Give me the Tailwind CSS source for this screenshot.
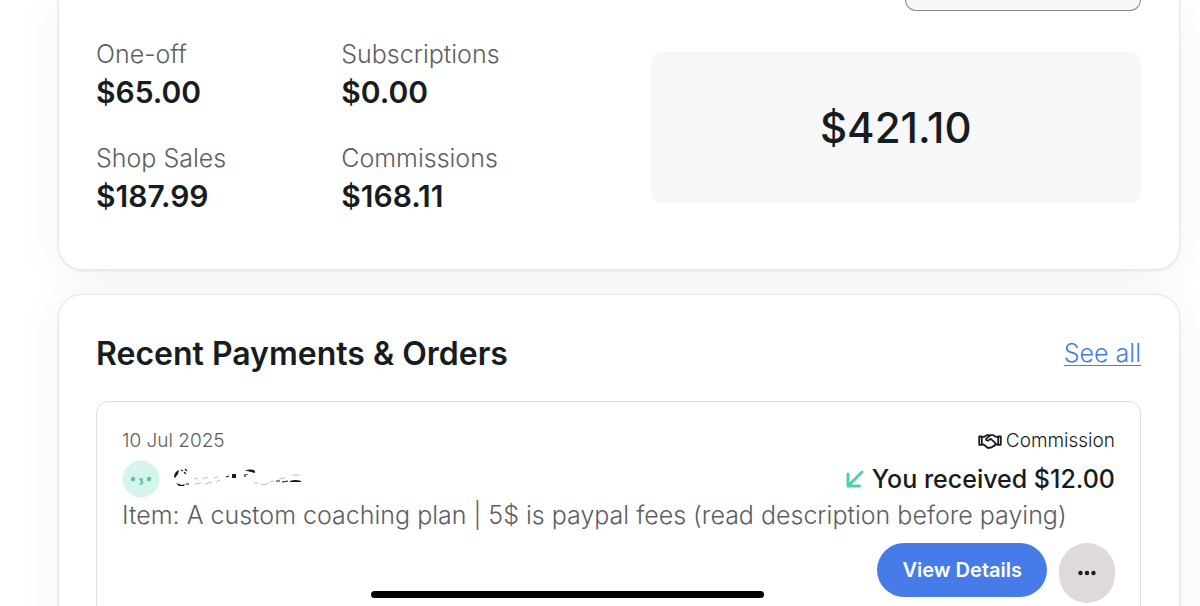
<!DOCTYPE html>
<html lang="en">
<head>
    <meta charset="UTF-8">
    <meta name="viewport" content="width=device-width, initial-scale=1.0">
    <title>Payments</title>
    <script src="https://cdn.jsdelivr.net/npm/@tailwindcss/browser@4"></script>
</head>
<body class="h-screen overflow-hidden bg-white font-['Inter',sans-serif] text-[#171c21]">
    <main class="flex flex-col gap-6 pl-[58px] pr-5">
        <!-- Balance summary -->
        <section class="rounded-b-3xl border border-t-0 border-[#e8e8e8] bg-white pr-[38px] pl-[37px] pb-[53px] shadow-[0_1px_3px_rgba(0,0,0,0.08),0_4px_48px_rgba(0,0,0,0.05)]">
            <div class="flex justify-end">
                <select aria-label="Period" class="h-[11px] w-[236px] appearance-none rounded-b-xl border border-t-0 border-[#8a8a8a] bg-[#f7f7f7]"></select>
            </div>
            <div class="mt-[25px] grid grid-cols-2 gap-16">
                <dl class="grid grid-cols-2 gap-y-7">
                    <div>
                        <dt class="text-[25px] leading-9 font-light text-[#5c5e61]">One-off</dt>
                        <dd class="text-[30px] leading-10 font-semibold">$65.00</dd>
                    </div>
                    <div>
                        <dt class="text-[25px] leading-9 font-light text-[#5c5e61]">Subscriptions</dt>
                        <dd class="text-[30px] leading-10 font-semibold">$0.00</dd>
                    </div>
                    <div>
                        <dt class="text-[25px] leading-9 font-light text-[#5c5e61]">Shop Sales</dt>
                        <dd class="text-[30px] leading-10 font-semibold">$187.99</dd>
                    </div>
                    <div>
                        <dt class="text-[25px] leading-9 font-light text-[#5c5e61]">Commissions</dt>
                        <dd class="text-[30px] leading-10 font-semibold">$168.11</dd>
                    </div>
                </dl>
                <div class="mt-4 flex h-[151px] items-center justify-center rounded-xl bg-[#f7f7f7]">
                    <p class="text-[42px] font-medium">$421.10</p>
                </div>
            </div>
        </section>

        <!-- Recent payments -->
        <section class="rounded-t-3xl border border-b-0 border-[#e8e8e8] bg-white pt-[37px] pr-[38px] pl-[37px] pb-10 shadow-[0_1px_3px_rgba(0,0,0,0.08),0_4px_48px_rgba(0,0,0,0.05)]">
            <div class="flex items-center justify-between">
                <h2 class="text-[32px] leading-11 font-semibold">Recent Payments &amp; Orders</h2>
                <a href="#" class="text-[25px] font-light text-[#467be8] underline decoration-1 underline-offset-3">See all</a>
            </div>

            <article class="mt-[25px] rounded-xl border border-[#dedfe0] px-[25px] pt-[25px] pb-10">
                <div class="flex items-center justify-between text-[19px] leading-7 font-light">
                    <time class="text-[#5c5e61]" datetime="2025-07-10">10 Jul 2025</time>
                    <span class="flex items-center gap-1">
                        <svg class="h-[15px] w-6" viewBox="0 0 24 15" fill="none" stroke="currentColor" stroke-width="1.800" stroke-linejoin="round" stroke-linecap="round">
                            <path d="M1.200 2.500h2.600v8.300H1.200zM22.800 2.500h-2.600v8.300h2.600z"/>
                            <path d="M4 2.800h2.200l2.600-1.600h2.600M20 2.800h-2.200l-2.600-1.600h-2.800L8.300 4.600c-.8 1 .5 2.600 2 1.800l2.500-1.600 4.800 4.600c.9 1-.1 2.200-1.300 1.800M4 10.500h1.600l3.400 2.800c1 .8 2.200.8 3 0 1.200.5 2.200 0 2.600-.9 1 .1 1.700-.3 1.900-1.200M17.800 10.500H20"/>
                        </svg>
                        Commission
                    </span>
                </div>
                <div class="flex items-center justify-between pt-1 leading-10">
                    <div class="flex items-center gap-3">
                        <svg class="size-[38px]" viewBox="0 0 38 38">
                            <circle cx="19" cy="19" r="18.500" fill="#d5f4ec"/>
                            <circle cx="11" cy="19" r="2.200" fill="#4fc9ae"/>
                            <circle cx="27" cy="19" r="2.200" fill="#4fc9ae"/>
                            <path d="M17 19h3l-1 2.200c2.500.2 2 3-1.200 2.600" fill="none" stroke="#4fc9ae" stroke-width="1.700"/>
                        </svg>
                        <!-- Redacted customer name -->
                        <svg class="h-6 w-[132px]" viewBox="0 0 132 24" role="img" aria-label="Hidden name" fill="#16191c">
                            <path d="M2 10c0-3 2-6 5-7l-1 4-3 4zM4 16l6 2 3-1-1 2-5 0zM73 4c3-2 8-2 10 0v2l-8-2z"/>
                            <path d="M9 3l2 1M12 5l2 2M13 2l2 2M14 17h3M73 7v3M75 7v1M54 10l3-1M104 14h4M110 15l6-1" stroke="#16191c" stroke-width="1.200"/>
                            <path d="M118 14q5-2 11 0v1h-11zM60 7h4v4h-4z"/>
                            <path d="M22 12l4-1M23 17l6-1M31 12l5-2M33 17l7-2M42 11l4-1M44 15l4-2M82 16h4M89 17q4 2 8-1M98 15l4-1M107 12l6-1M121 8h6" fill="none" stroke="#bbb" stroke-width="1"/>
                        </svg>
                    </div>
                    <p class="flex items-center gap-2 text-[25px] leading-10 font-medium">
                        <svg class="size-[18px]" viewBox="0 0 18 18" fill="none" stroke="#4fd1a5" stroke-width="3" stroke-linecap="round" stroke-linejoin="round">
                            <path d="M16 2L2.500 15.500M2 4v12h11.500"/>
                        </svg>
                        You received $12.00
                    </p>
                </div>
                <p class="text-[25px] leading-8 font-light text-[#5c5e61]">Item: A custom coaching plan | 5$ is paypal fees (read description before paying)</p>
                <div class="mt-3 flex items-start justify-end gap-3">
                    <button type="button" class="h-[54px] rounded-full bg-[#467be8] px-[25px] text-xl font-semibold text-white">View Details</button>
                    <button type="button" aria-label="More" class="flex h-15 w-14 items-center justify-center rounded-full bg-[#dfd9da]">
                        <svg class="h-1.5 w-[18px]" viewBox="0 0 18 6" fill="#171c21">
                            <circle cx="2.500" cy="3" r="2.200"/>
                            <circle cx="9" cy="3" r="2.200"/>
                            <circle cx="15.500" cy="3" r="2.200"/>
                        </svg>
                    </button>
                </div>
            </article>
        </section>
    </main>

    <!-- Home indicator -->
    <div class="fixed inset-x-0 bottom-2 flex justify-center pr-[65px]">
        <div class="h-[7px] w-[393px] rounded-full bg-black"></div>
    </div>
</body>
</html>
